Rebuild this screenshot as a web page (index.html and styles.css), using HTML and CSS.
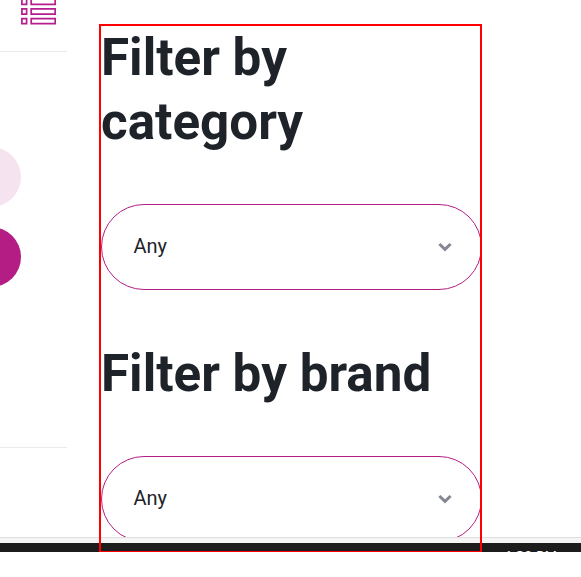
FILE: index.html
```html
<!DOCTYPE html>
<html lang="en">
<head>
<meta charset="utf-8">
<title>Filters</title>
<link rel="stylesheet" href="styles.css">
</head>
<body>
<div class="screen">
  <div class="page">
    <aside class="listing">
      <div class="toolbar">
        <svg class="list-icon" width="35" height="25" viewBox="0 0 35 25" fill="none" stroke="#b41e8e" stroke-width="1.7">
          <path d="M.9-1h4.7v5.3H.9zM10.2-1h24v5.3h-24zM.9 8.9h4.7v5.2H.9zM10.2 8.9h24v5.2h-24zM.9 18.6h4.7v5H.9zM10.2 18.6h24v5h-24z"/>
        </svg>
      </div>
      <div class="results">
        <div class="dot dot-light"></div>
        <div class="dot dot-solid"></div>
      </div>
    </aside>
    <main class="filters">
      <h2>Filter by category</h2>
      <div class="select"><span>Any</span>
        <svg width="16" height="12" viewBox="0 0 16 12"><path d="M2.4 3L8 8.4 13.6 3" fill="none" stroke="#858792" stroke-width="3"/></svg>
      </div>
      <h2 class="brand">Filter by brand</h2>
      <div class="select"><span>Any</span>
        <svg width="16" height="12" viewBox="0 0 16 12"><path d="M2.4 3L8 8.4 13.6 3" fill="none" stroke="#858792" stroke-width="3"/></svg>
      </div>
    </main>
  </div>
  <div class="window-edge"></div>
  <footer class="taskbar"><span>1:30 PM</span></footer>
  <div class="highlight"></div>
</div>
</body>
</html>
```
FILE: styles.css
```css
* { box-sizing: border-box; }
body { margin: 0; background: #fff; font-family: Roboto, sans-serif; color: #1e2229; }
.screen { position: relative; height: 552px; overflow: hidden; }
.page { display: flex; height: 537px; overflow: hidden; }
.listing { width: 67px; margin-right: 34px; flex: none; }
.toolbar { height: 52px; border-bottom: 1px solid #ebebeb; }
.list-icon { display: block; margin-left: 21px; }
.results { height: 396px; padding-top: 95px; border-bottom: 1px solid #ebebeb; overflow: hidden; }
.dot { width: 60px; height: 60px; margin: 0 0 20px -39px; border-radius: 50%; }
.dot-light { background: #f5e4f0; }
.dot-solid { background: #b41e84; }
.filters { width: 381px; flex: none; padding-top: 26px; }
h2 { margin: 0 0 50px; font-size: 51.2px; line-height: 64px; font-weight: 700; }
h2.brand { margin-top: 52px; }
.select { display: flex; align-items: center; justify-content: space-between; height: 86px; padding: 0 28px 0 32px; border: 1px solid #b41e84; border-radius: 43px; font-size: 20px; }
.select span { margin: 0 0 2px -0.6px; }
.window-edge { height: 6px; background: #f5f5f5; border-top: 1px solid #dedede; }
.taskbar { height: 9px; background: #1c1c1c; color: #fff; overflow: hidden; }
.taskbar span { display: block; margin: 4px 24px 0 0; text-align: right; font: 14px/18px "Open Sans", sans-serif; }
.highlight { position: absolute; left: 99px; top: 24px; width: 383px; height: 528px; border: 2px solid #f00; border-bottom-width: 1px; }
```
